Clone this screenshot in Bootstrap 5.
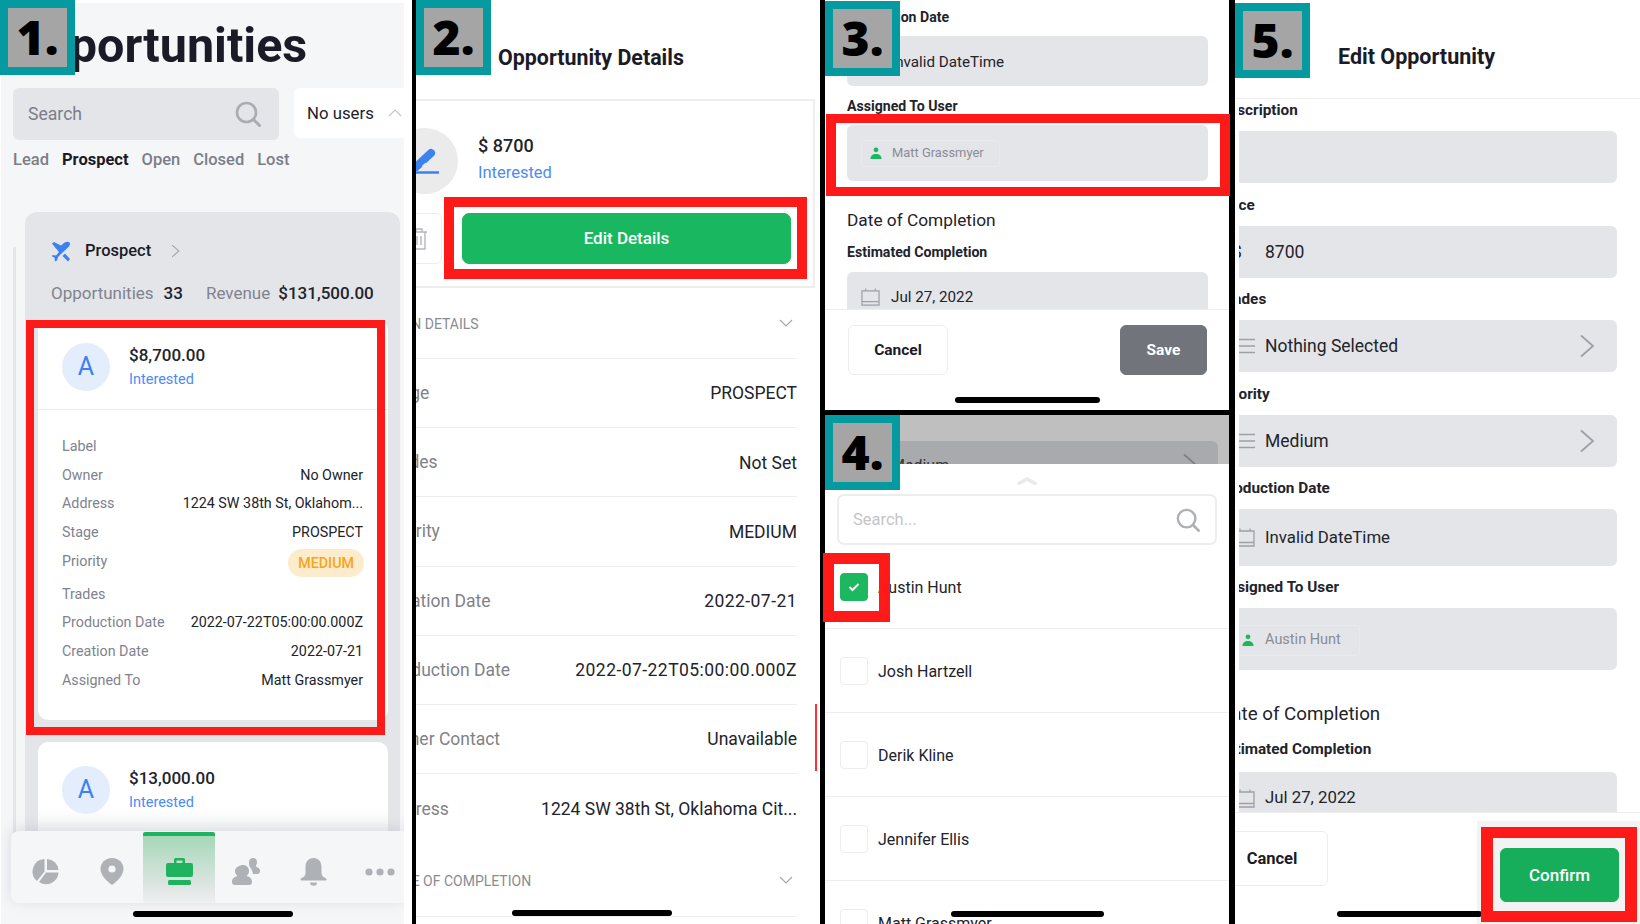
<!DOCTYPE html>
<html lang="en">
<head>
<meta charset="utf-8">
<title>Opportunity walkthrough</title>
<link href="https://cdn.jsdelivr.net/npm/bootstrap@5.3.0/dist/css/bootstrap.min.css" rel="stylesheet">
<style>
html,body{margin:0;background:#000;overflow:hidden}
body{font-family:Roboto,"Liberation Sans",sans-serif;color:#22232b}
.stage{position:relative;width:1640px;height:924px;background:#000;display:flex;overflow:hidden}
.pane{background:#fff;overflow:hidden;position:relative;flex:none}
.pane-a{width:412px;height:924px;padding:3px 8px 0 1px;margin-right:4px}
.pane-b{width:404px;height:924px;margin-right:5px}
.stack{width:404px;height:924px;margin-right:6px;flex:none}
.pane-c{width:404px;height:410px;margin-bottom:5px}
.pane-d{width:404px;height:509px;background:#bfbfbf}
.pane-e{width:405px;height:924px}

/* overlays */
.stepbox{position:absolute;width:75px;height:75px;border:8px solid #049aa0;background:#a5a5a5;color:#000;font-family:"Open Sans",sans-serif;font-weight:800;font-size:48px;line-height:58px;text-align:center;z-index:5}
.hilite{position:absolute;border-style:solid;border-color:#ff1a1a;z-index:4}
.homebar{position:absolute;height:6px;background:#000;border-radius:3px;z-index:3}

/* pane A */
.a-body{height:921px;background:#f5f6f8;position:relative;overflow:hidden}
.a-title{height:85px;padding-left:8px;font-size:48.500px;font-weight:700;line-height:85px;color:#1a1b26}
.a-search{width:266px;height:52px;margin-left:12px;background:#e4e5e9;border-radius:6px;padding:0 18px 0 15px;font-size:17.600px;color:#7b7e89}
.a-search span{padding-top:1px}
.a-users{flex:1;height:50px;margin-left:15px;background:#fff;border-radius:6px 0 0 6px;padding:0 2px 0 13px;font-size:16.800px;color:#22232b}
.a-users span{padding-top:2px}
.a-tabs{height:24px;margin:7px 0 0 12px;gap:13px;font-size:16.500px;font-weight:500;color:#7b7e89;line-height:26px}
.a-tabs b{font-weight:700;color:#1a1b26}
.a-lane{margin-top:41px;height:636px;overflow:hidden}
.a-peek{width:3px;height:620px;margin:35px 9px 0 12px;background:#e4e5e9;border-radius:3px 0 0 0;flex:none}
.a-group{width:375px;height:700px;background:#e4e5e9;border-radius:12px;flex:none;padding:25px 12px 0 13px}
.a-ghead{height:28px;margin-left:13px;font-size:16.500px;font-weight:500;color:#1a1b26}
.a-stats{height:28px;margin:15px 0 12px 13px;font-size:17px;color:#80838e}
.a-stats b{font-weight:500;color:#22232b}
.a-card{background:#fff;border-radius:10px;margin-bottom:22px}
.a-cardtop{height:90px;padding:23px 0 0 24px;border-bottom:1px solid #ececef}
.a-fade{height:120px;background:linear-gradient(#fff 55%,#e4e5e9 100%)}
.a-avatar{width:48px;height:48px;border-radius:50%;background:#e3edfb;color:#3b82f0;font-size:25px;line-height:48px;text-align:center;flex:none;margin-right:19px}
.a-amt{font-size:17px;font-weight:500;line-height:24px;color:#22232b}
.a-int{font-size:14.500px;line-height:24px;color:#4b8bf5;padding-top:1px}
.a-rows{padding:22px 25px 26px 24px;font-size:14.300px;color:#80838e}
.a-row{height:28.700px;line-height:28.700px}
.a-row span:last-child{color:#22232b}
.a-prio{height:32.900px;align-items:flex-start}
.a-pill{height:28px;margin:2px -1px 0 0;padding:0 10px;line-height:28px;border-radius:14px;background:#fdeccb;color:#f9a51a!important;font-weight:500}
.a-nav{position:absolute;left:10px;top:828px;width:393px;height:72px;background:#f5f6f8;border-radius:8px 0 0 8px;box-shadow:0 -2px 14px rgba(120,125,135,.22);padding-left:0.500px;z-index:2}
.a-navitem{flex:0 0 67px;height:72px;padding-top:9px}
.a-navon{flex:0 0 72px;margin:1px -2.500px 0;height:71px;padding-top:4px;border-top:4px solid #1fb35f;border-radius:2px 2px 0 0;background:linear-gradient(#a5d8b8,#dfe5e3 75%,#eef0f1)}

/* pane B */
.b-title{height:99px;padding:42px 0 0 82px;font-size:21.400px;font-weight:700;line-height:32px;color:#1a1b26}
.b-box{height:189px;margin-right:5px;border:2px solid #eee;border-left:0;padding-top:27px}
.b-avatar{width:66px;height:66px;margin-left:-24px;border-radius:50%;background:#ebebeb;flex:none}
.b-amt{font-size:18px;font-weight:500;line-height:26px;color:#22232b}
.b-int{font-size:16.500px;line-height:26px;color:#4b8bf5;margin-top:1px}
.b-actions{margin-top:19px}
.b-trash{width:60px;height:51px;margin-left:-34px;border:1px solid #eee;border-radius:6px;flex:none;padding-left:27px}
.b-edit{width:329px;height:51px;margin-left:20px;background:#1ab761;border-color:#1ab761;color:#fff;font-size:17px;font-weight:500;border-radius:7px;--bs-btn-hover-bg:#1ab761;--bs-btn-hover-color:#fff}
.b-list{margin:0 23px 0 -24px}
.b-sec{font-size:14px;color:#8a8b90;border-bottom:1.500px solid #eee}
.b-sec span{padding-top:3px;margin-left:-6px}
.b-row{height:69.200px;font-size:17.500px;color:#818287;border-bottom:1.500px solid #eee}
.b-row span:first-child{margin-left:-7.500px}
.b-row span:last-child{color:#22232b;padding-top:1px}
.b-num{letter-spacing:.45px}
.b-last{border-bottom:0}
.b-scroll{position:absolute;left:399px;top:704px;width:2px;height:67px;background:#ff3030}

/* form bits */
.fld{background:#e4e5e9;border-radius:6px}
.lbl{font-weight:700;color:#22232b;height:20px}
.chip{border:1px solid #e9eaee;border-radius:4px;color:#8a8c94}
.c-form{height:309px;overflow:hidden;padding:7px 21px 0 22px}
.c-form .lbl{font-size:14.100px;line-height:21px}
.c-form .fld{font-size:15.200px;padding-left:14px}
.c-ico{width:19px;margin-right:11px;flex:none}
.c-foot{height:101px;border-top:1px solid #eee;padding:15px 22px 0 23px}
.btn-ghost{height:50px;border:1px solid #eceded;border-radius:6px;background:#fff;font-size:15.500px;font-weight:700;color:#1a1b26;padding-top:8px}
.btn-save{height:50px;width:87px;background:#72747c;border-color:#72747c;color:#fff;font-size:15.500px;font-weight:700;border-radius:6px;padding-top:8px}

/* pane D */
.d-under{height:49px;padding:26px 11px 0 22px;overflow:hidden}
.d-field{height:50px;background:#a9aaae;border-radius:6px;padding-left:44px;font-size:16px;color:#33343a}
.d-chev{margin-right:20px;margin-top:-2px}
.d-sheet{background:#fff;height:460px}
.d-grab{height:30px;padding-top:13px}
.d-search{height:51px;margin:0 12px;border:2px solid #eceded;border-radius:7px;padding:0 15px 0 14px;font-size:16.500px;color:#c5c5c8}
.d-search span{padding-top:2px}
.d-row{height:84px;padding-left:15px;border-bottom:1.500px solid #eee;font-size:16px;color:#22232b}
.d-row span{padding-top:2px}
.d-box{width:28px;height:28px;margin-right:10px;border:1.500px solid #ededee;border-radius:4px;flex:none}
.d-on{background:#1bb860;border-color:#1bb860}

/* pane E */
.e-title{height:99px;padding:42px 0 0 103px;font-size:21.500px;font-weight:700;line-height:30px;color:#1a1b26;border-bottom:1px solid #eee}
.e-clip{height:713px;margin-left:4px;overflow:hidden;padding-top:1px}
.e-form{margin:0 23px 0 -20px;font-size:17.500px;color:#22232b}
.e-form .lbl{font-size:15.300px;line-height:20px}
.e-form .fld{padding-left:16px}
.e-date{font-size:16.800px}
.e-ico{width:20px;margin-right:10px;flex:none}
.e-dollar{width:20px;margin:0 13px 0 -3px;flex:none}
.e-foot{height:112px;padding-top:18px;border-top:1px solid #eee}
.e-cancel{width:112px;height:55px;margin-left:-19px;font-size:16.500px}
.e-zone{position:absolute;left:1477px;top:821px;width:163px;height:103px;background:#f3f3f3;z-index:3;padding:27px 0 0 23px}
.e-confirm{width:119px;height:54px;background:#17ae5b;border-color:#17ae5b;color:#fff;font-size:17px;font-weight:500;border-radius:6px;padding-top:8px}
</style>
</head>
<body>
<svg width="0" height="0" class="d-none">
  <symbol id="i-search" viewBox="0 0 26 26"><circle cx="11.500" cy="11.500" r="9.500" fill="none" stroke="currentColor" stroke-width="2.600"/><path d="M18.500 18.500l6 6" stroke="currentColor" stroke-width="3" stroke-linecap="round"/></symbol>
  <symbol id="i-person" viewBox="0 0 12 12"><circle cx="6" cy="2.800" r="2.400" fill="#1bb860"/><path d="M.5 12c0-3.400 2.200-5 5.500-5s5.500 1.600 5.500 5z" fill="#1bb860"/></symbol>
  <symbol id="i-cal" viewBox="0 0 20 19"><path d="M1 3h18v15H1zM1 14.500h18M5 .5v3M15 .5v3" fill="none" stroke="#9ea0a8" stroke-width="1.300"/></symbol>
  <symbol id="i-menu" viewBox="0 0 20 16"><path d="M0 1.500h20M0 8h20M0 14.500h20" stroke="#9ea0a8" stroke-width="1.500"/></symbol>
  <symbol id="i-right" viewBox="0 0 16 24"><path d="M2 1.500l12 10.500-12 10.500" fill="none" stroke="#9ea0a8" stroke-width="1.800"/></symbol>
  <symbol id="i-down" viewBox="0 0 14 8"><path d="M1 1l6 6 6-6" fill="none" stroke="#a4a5aa" stroke-width="1.100"/></symbol>
</svg>
<div class="stage">

  <!-- 1 -->
  <section class="pane pane-a">
    <div class="a-body">
      <div class="a-title">Opportunities</div>
      <div class="d-flex">
        <div class="a-search d-flex align-items-center justify-content-between"><span>Search</span><svg width="26" height="26" style="color:#aaacb3"><use href="#i-search"/></svg></div>
        <div class="a-users d-flex align-items-center justify-content-between"><span>No users</span><svg width="14" height="8" viewBox="0 0 14 8"><path d="M1 7l6-6 6 6" fill="none" stroke="#c4c5ca" stroke-width="1.100"/></svg></div>
      </div>
      <div class="a-tabs d-flex"><span>Lead</span><b>Prospect</b><span>Open</span><span>Closed</span><span>Lost</span></div>
      <div class="a-lane d-flex align-items-start">
        <div class="a-peek"></div>
        <div class="a-group">
          <div class="a-ghead d-flex align-items-center">
            <svg width="20" height="21" viewBox="0 0 20 21" style="margin-right:14px"><path d="M1 2.500L3 1l7 3.500L13 2c2-1.500 4.500-1.500 5.500-.5s.5 3-1 4.500L10 13l-3 3-1 3.500-2 1-.5-4L1 15.500l.5-1.500 3.500.5L8 11 5 7.500z" fill="#3b82f0"/><path d="M14 12.500l5 5.500-2 2.500-5.500-5.500z" fill="#3b82f0"/></svg>
            <span>Prospect</span>
            <svg width="9" height="14" viewBox="0 0 16 24" style="margin-left:20px"><use href="#i-right"/></svg>
          </div>
          <div class="a-stats d-flex align-items-center"><span>Opportunities</span><b style="margin-left:10px">33</b><span style="margin-left:23px">Revenue</span><b style="margin-left:8px">$131,500.00</b></div>
          <div class="a-card">
            <div class="a-cardtop d-flex align-items-start">
              <div class="a-avatar">A</div>
              <div><div class="a-amt">$8,700.00</div><div class="a-int">Interested</div></div>
            </div>
            <div class="a-rows">
              <div class="a-row d-flex justify-content-between"><span>Label</span><span></span></div>
              <div class="a-row d-flex justify-content-between"><span>Owner</span><span>No Owner</span></div>
              <div class="a-row d-flex justify-content-between"><span>Address</span><span>1224 SW 38th St, Oklahom...</span></div>
              <div class="a-row d-flex justify-content-between"><span>Stage</span><span>PROSPECT</span></div>
              <div class="a-row a-prio d-flex justify-content-between"><span>Priority</span><span class="a-pill">MEDIUM</span></div>
              <div class="a-row d-flex justify-content-between"><span>Trades</span><span></span></div>
              <div class="a-row d-flex justify-content-between"><span>Production Date</span><span>2022-07-22T05:00:00.000Z</span></div>
              <div class="a-row d-flex justify-content-between"><span>Creation Date</span><span>2022-07-21</span></div>
              <div class="a-row d-flex justify-content-between"><span>Assigned To</span><span>Matt Grassmyer</span></div>
            </div>
          </div>
          <div class="a-card a-fade">
            <div class="d-flex align-items-start" style="padding:24px 0 0 24px">
              <div class="a-avatar">A</div>
              <div><div class="a-amt">$13,000.00</div><div class="a-int">Interested</div></div>
            </div>
          </div>
        </div>
      </div>
      <nav class="a-nav d-flex">
        <div class="a-navitem d-flex align-items-center justify-content-center"><svg width="27" height="27" viewBox="0 0 27 27"><path d="M12.500 1A12.500 12.500 0 0 0 5 23l7.500-9.500z" fill="#aeb1b6"/><path d="M15 1v11h11.500A12 12 0 0 0 15 1z" fill="#aeb1b6"/><path d="M14 14.500L7 24a12.500 12.500 0 0 0 19.500-9.500z" fill="#aeb1b6"/></svg></div>
        <div class="a-navitem d-flex align-items-center justify-content-center"><svg width="24" height="27" viewBox="0 0 24 27"><path d="M12 0C5 0 .5 5 .5 11c0 7 7.500 13 11.500 16 4-3 11.500-9 11.500-16C23.500 5 19 0 12 0z" fill="#aeb1b6"/><circle cx="12" cy="11" r="3.600" fill="#f5f6f8"/></svg></div>
        <div class="a-navitem a-navon d-flex align-items-center justify-content-center"><svg width="27" height="27" viewBox="0 0 27 27"><path d="M8 6V1.500A1.500 1.500 0 0 1 9.500 0h8A1.500 1.500 0 0 1 19 1.500V6h-2.500V2.500h-6V6z" fill="#1fb35f"/><rect y="5" width="27" height="14" rx="2" fill="#1fb35f"/><rect x="2" y="22" width="23" height="5" rx="1.500" fill="#1fb35f"/></svg></div>
        <div class="a-navitem d-flex align-items-center justify-content-center"><svg width="28" height="27" viewBox="0 0 28 27"><path d="M11 7c3.500 0 6 2.500 6 6 0 2.200-1 4-2.500 5 3.500 1 5.500 2.500 5.500 6 0 2-1 3-3 3H3c-2 0-3-1-3-3 0-3.500 2-5 5.500-6C4 17 3 15.200 3 13c0-3.500 4.500-6 8-6z" fill="#aeb1b6"/><path d="M17 4c0-2 1.500-4 4-4s4 2 4 4c0 1.500-.5 2.500-1 3.500 0 1.500 1 1.800 2.500 2.500 1 .5 1.500 1.500 1.500 3 0 1.500-.8 3-2.500 3H21c-.5-3-1.500-5.500-3.500-7.500-.3-1.500-.5-3-.5-4.500z" fill="#aeb1b6"/></svg></div>
        <div class="a-navitem d-flex align-items-center justify-content-center"><svg width="27" height="28" viewBox="0 0 27 28"><path d="M13.500 0c-5 0-8 3.500-8 9v6c0 2.500-1.500 4-4.500 5.500C0 21 .2 22.500 1.500 22.500h24c1.300 0 1.500-1.500.5-2C23 19 21.500 17.500 21.500 15V9c0-5.500-3-9-8-9z" fill="#aeb1b6"/><path d="M10 24.500h7a3.500 3.200 0 0 1-7 0z" fill="#aeb1b6"/></svg></div>
        <div class="a-navitem d-flex align-items-center justify-content-center"><svg width="30" height="8" viewBox="0 0 30 8"><circle cx="4" cy="4" r="3.600" fill="#aeb1b6"/><circle cx="15" cy="4" r="3.600" fill="#aeb1b6"/><circle cx="26" cy="4" r="3.600" fill="#aeb1b6"/></svg></div>
      </nav>
    </div>
  </section>

  <!-- 2 -->
  <section class="pane pane-b">
    <div class="b-title">Opportunity Details</div>
    <div class="b-box">
      <div class="d-flex">
        <div class="b-avatar d-flex align-items-center justify-content-center"><svg width="30" height="30" viewBox="0 0 30 30"><path d="M6 21L21 7" stroke="#3b82f0" stroke-width="8" stroke-linecap="round"/><path d="M12.500 20.500l3.500-3" stroke="#ebebeb" stroke-width="1.800"/><path d="M2 26.500h27" stroke="#3b82f0" stroke-width="2.500"/></svg></div>
        <div style="margin-left:20px;margin-top:5px"><div class="b-amt">$ 8700</div><div class="b-int">Interested</div></div>
      </div>
      <div class="b-actions d-flex">
        <div class="b-trash d-flex align-items-center"><svg width="18" height="22" viewBox="0 0 18 22"><path d="M1 4h16M6 4V1h6v3M3 4v17h12V4M7 8v9M11 8v9" fill="none" stroke="#b4b6ba" stroke-width="1.400"/></svg></div>
        <button class="btn b-edit" type="button">Edit Details</button>
      </div>
    </div>
    <div class="b-list">
      <div class="b-sec d-flex align-items-center justify-content-between" style="height:71px"><span>MAIN DETAILS</span><svg width="14" height="8" class="me-1"><use href="#i-down"/></svg></div>
      <div class="b-row d-flex align-items-center justify-content-between"><span>Stage</span><span>PROSPECT</span></div>
      <div class="b-row d-flex align-items-center justify-content-between"><span>Trades</span><span>Not Set</span></div>
      <div class="b-row d-flex align-items-center justify-content-between"><span>Priority</span><span>MEDIUM</span></div>
      <div class="b-row d-flex align-items-center justify-content-between"><span>Creation Date</span><span class="b-num">2022-07-21</span></div>
      <div class="b-row d-flex align-items-center justify-content-between"><span>Production Date</span><span class="b-num">2022-07-22T05:00:00.000Z</span></div>
      <div class="b-row d-flex align-items-center justify-content-between"><span>Owner Contact</span><span>Unavailable</span></div>
      <div class="b-row b-last d-flex align-items-center justify-content-between"><span>Address</span><span>1224 SW 38th St, Oklahoma Cit...</span></div>
      <div class="b-sec d-flex align-items-center justify-content-between" style="height:74px"><span>DATE OF COMPLETION</span><svg width="14" height="8" class="me-1"><use href="#i-down"/></svg></div>
    </div>
    <div class="b-scroll"></div>
  </section>

  <div class="stack">
    <!-- 3 -->
    <section class="pane pane-c">
      <div class="c-form">
        <div class="lbl">Production Date</div>
        <div class="fld d-flex align-items-center" style="height:50px;margin-top:9px"><span class="c-ico"></span><span style="padding-top:2px">Invalid DateTime</span></div>
        <div class="lbl" style="margin-top:10px">Assigned To User</div>
        <div class="fld d-flex align-items-center" style="height:56px;margin-top:9px">
          <div class="chip d-flex align-items-center" style="height:27px;width:139px;padding-left:8px;font-size:12.900px"><svg width="12" height="12" style="margin-right:10px"><use href="#i-person"/></svg><span>Matt Grassmyer</span></div>
        </div>
        <div style="font-size:17.300px;line-height:24px;margin-top:27px;color:#22232b">Date of Completion</div>
        <div class="lbl" style="margin-top:10px">Estimated Completion</div>
        <div class="fld d-flex align-items-center" style="height:50px;margin-top:10px"><svg class="c-ico" height="18"><use href="#i-cal"/></svg><span>Jul 27, 2022</span></div>
      </div>
      <div class="c-foot d-flex justify-content-between">
        <button class="btn btn-ghost" style="width:100px" type="button">Cancel</button>
        <button class="btn btn-save" type="button">Save</button>
      </div>
    </section>

    <!-- 4 -->
    <section class="pane pane-d">
      <div class="d-under">
        <div class="d-field d-flex align-items-center justify-content-between"><span>Medium</span><svg width="16" height="24" viewBox="0 0 16 24" class="d-chev"><path d="M2 1.500l12 10.500-12 10.500" fill="none" stroke="#7f8086" stroke-width="1.800"/></svg></div>
      </div>
      <div class="d-sheet">
        <div class="d-grab d-flex justify-content-center"><svg width="20" height="8" viewBox="0 0 20 8"><path d="M2 6.500l8-4.500 8 4.500" fill="none" stroke="#e9e9ea" stroke-width="3.500" stroke-linecap="round"/></svg></div>
        <div class="d-search d-flex align-items-center justify-content-between"><span>Search...</span><svg width="24" height="24" style="color:#aeb0b6"><use href="#i-search"/></svg></div>
        <div class="d-row d-flex align-items-center"><div class="d-box d-on d-flex align-items-center justify-content-center"><svg width="12" height="10" viewBox="0 0 12 10"><path d="M1.500 5l3 3 6-6" fill="none" stroke="#fff" stroke-width="2"/></svg></div><span>Austin Hunt</span></div>
        <div class="d-row d-flex align-items-center"><div class="d-box"></div><span>Josh Hartzell</span></div>
        <div class="d-row d-flex align-items-center"><div class="d-box"></div><span>Derik Kline</span></div>
        <div class="d-row d-flex align-items-center"><div class="d-box"></div><span>Jennifer Ellis</span></div>
        <div class="d-row d-flex align-items-center"><div class="d-box"></div><span>Matt Grassmyer</span></div>
      </div>
    </section>
  </div>

  <!-- 5 -->
  <section class="pane pane-e">
    <div class="e-title">Edit Opportunity</div>
    <div class="e-clip">
      <div class="e-form">
        <div class="lbl">Description</div>
        <div class="fld" style="height:52px;margin-top:11px"></div>
        <div class="lbl" style="margin-top:12px">Price</div>
        <div class="fld d-flex align-items-center" style="height:52px;margin-top:11px"><span class="e-dollar">$</span><span>8700</span></div>
        <div class="lbl" style="margin-top:11px">Trades</div>
        <div class="fld d-flex align-items-center justify-content-between" style="height:52px;margin-top:11px"><span class="d-flex align-items-center"><svg class="e-ico" height="16"><use href="#i-menu"/></svg><span>Nothing Selected</span></span><svg width="16" height="24" style="margin-right:22px"><use href="#i-right"/></svg></div>
        <div class="lbl" style="margin-top:12px">Priority</div>
        <div class="fld d-flex align-items-center justify-content-between" style="height:52px;margin-top:11px"><span class="d-flex align-items-center"><svg class="e-ico" height="16"><use href="#i-menu"/></svg><span>Medium</span></span><svg width="16" height="24" style="margin-right:22px"><use href="#i-right"/></svg></div>
        <div class="lbl" style="margin-top:11px">Production Date</div>
        <div class="fld d-flex align-items-center" style="height:57px;margin-top:11px"><svg class="e-ico" height="19"><use href="#i-cal"/></svg><span class="e-date">Invalid DateTime</span></div>
        <div class="lbl" style="margin-top:11px">Assigned To User</div>
        <div class="fld d-flex align-items-center" style="height:62px;margin-top:11px">
          <div class="chip d-flex align-items-center" style="height:31px;width:127px;padding-left:8px;font-size:14.500px;margin-left:-2px;margin-top:2px"><svg width="12" height="12" style="margin-right:11px"><use href="#i-person"/></svg><span>Austin Hunt</span></div>
        </div>
        <div style="font-size:18.750px;line-height:24px;margin-top:32px">Date of Completion</div>
        <div class="lbl" style="margin-top:13px">Estimated Completion</div>
        <div class="fld d-flex align-items-center" style="height:52px;margin-top:13px"><svg class="e-ico" height="19"><use href="#i-cal"/></svg><span class="e-date">Jul 27, 2022</span></div>
      </div>
    </div>
    <div class="e-foot">
      <button class="btn btn-ghost e-cancel" type="button">Cancel</button>
    </div>
  </section>

  <!-- overlays on the composite -->
  <div class="e-zone"><button class="btn e-confirm" type="button">Confirm</button></div>

  <div class="hilite" style="left:26px;top:320px;width:359px;height:415px;border-width:8px"></div>
  <div class="hilite" style="left:444px;top:197px;width:363px;height:82px;border-width:10px"></div>
  <div class="hilite" style="left:826px;top:114px;width:404px;height:82px;border-width:9px 10px"></div>
  <div class="hilite" style="left:823px;top:553px;width:67px;height:69px;border-width:11px"></div>
  <div class="hilite" style="left:1481px;top:827px;width:156px;height:95px;border-width:11px 12px"></div>

  <div class="stepbox" style="left:0;top:0">1.</div>
  <div class="stepbox" style="left:416px;top:0">2.</div>
  <div class="stepbox" style="left:825px;top:1px">3.</div>
  <div class="stepbox" style="left:825px;top:415px">4.</div>
  <div class="stepbox" style="left:1235px;top:3px">5.</div>

  <div class="homebar" style="left:133px;top:911px;width:160px"></div>
  <div class="homebar" style="left:512px;top:910px;width:160px"></div>
  <div class="homebar" style="left:955px;top:397px;width:145px"></div>
  <div class="homebar" style="left:951px;top:911px;width:153px"></div>
  <div class="homebar" style="left:1337px;top:911px;width:145px"></div>
</div>
<script src="https://cdn.jsdelivr.net/npm/bootstrap@5.3.0/dist/js/bootstrap.bundle.min.js"></script>
</body>
</html>
